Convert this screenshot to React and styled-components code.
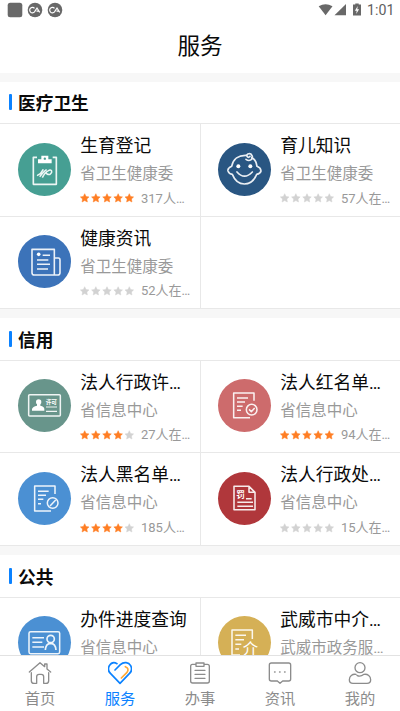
import React from 'react';
import styled, { createGlobalStyle } from 'styled-components';

const GlobalStyle = createGlobalStyle`
  * {
    box-sizing: border-box;
  }
  body {
    margin: 0;
    background: #fff;
    font-family: Roboto, 'Noto Sans CJK SC', sans-serif;
    color: #0a0a0a;
  }
`;

const Screen = styled.div`
  display: flex;
  flex-direction: column;
  height: 711px;
  overflow: hidden;
  background: #fff;
`;

const StatusBar = styled.div`
  display: flex;
  justify-content: space-between;
  flex: none;
  height: 20px;
  padding: 0 8px 0 7px;
`;

const StatusTime = styled.span`
  width: 25px;
  font-size: 14.2px;
  font-weight: 400;
  line-height: 21px;
  text-align: right;
  color: #606060;
`;

const StatusRight = styled.div`
  display: flex;
  gap: 4px;
`;

const Header = styled.header`
  flex: none;
  height: 52.5px;
  font-size: 22.6px;
  line-height: 54px;
  text-align: center;
`;

const Content = styled.main`
  flex: 1;
  min-height: 0;
  overflow: hidden;
`;

const Section = styled.section`
  border-top: 9px solid #f7f7f7;
`;

const SectionTitle = styled.h2`
  display: flex;
  align-items: center;
  gap: 6px;
  height: 42.6px;
  margin: 0;
  padding: 0 0 0 9px;
  border-bottom: 1px solid #e8e8e8;
  font-size: 17.7px;
  font-weight: 700;

  &::before {
    content: '';
    width: 3px;
    height: 16px;
    border-radius: 1px;
    background: #0b82ff;
  }
`;

const Grid = styled.div`
  display: grid;
  grid-template-columns: 200px 200px;
`;

const Card = styled.div`
  display: flex;
  height: 92.6px;
  padding: 7.5px 0 0 18px;
  border-bottom: 1px solid #e8e8e8;

  &:nth-child(even) {
    border-left: 1px solid #e8e8e8;
    padding-left: 17px;
  }
`;

const Badge = styled.svg`
  flex: none;
  width: 53px;
  height: 53px;
  margin: 11px 9.3px 0 0;
  border-radius: 50%;
  background: ${(props) => props.$color};
  fill: none;
  stroke: #fff;
  stroke-width: 4.6;
  stroke-linejoin: round;
  stroke-opacity: 0.9;

  text {
    fill: #fff;
    stroke: none;
    font-family: 'Noto Sans CJK SC', sans-serif;
  }
`;

const Info = styled.div`
  padding-top: 0.5px;
  white-space: nowrap;
`;

const Name = styled.div`
  font-size: 17.75px;
  line-height: 29px;
`;

const Dept = styled.div`
  font-size: 15.5px;
  line-height: 26.6px;
  color: #999;
`;

const Rating = styled.div`
  display: flex;
  align-items: center;
  height: 23px;
  margin-top: -1px;
`;

const Stars = styled.svg`
  width: 56px;
  height: 10px;
  margin-right: 4.7px;
`;

const Count = styled.span`
  font-size: 13px;
  line-height: 23px;
  color: #999;
`;

const TabBar = styled.nav`
  display: flex;
  flex: none;
  height: 56px;
  border-top: 1px solid #e2e2e2;
  background: #fff;
`;

const Tab = styled.div`
  display: flex;
  flex: 1;
  flex-direction: column;
  align-items: center;
  padding-top: 5px;
  font-size: 15.3px;
  line-height: 22px;
  color: ${(props) => (props.$active ? '#0b82ff' : '#8c8c8c')};

  svg {
    flex: none;
    width: 24px;
    height: 24px;
    margin-bottom: 3px;
    fill: none;
    stroke: currentColor;
    stroke-width: 4;
    stroke-linecap: round;
    stroke-linejoin: round;
  }
`;

const icons = {
  clipboard: (
    <>
      <path d='M57 43H46V124H115V43H104' strokeWidth='5' />
      <path
        d='M60 61V49H70V38H91V49H101V61Z'
        fill='#fff'
        stroke='none'
      />
      <circle cx='80.5' cy='47' r='3.5' fill='#469f93' stroke='none' />
      <path d='M57 98Q70 92 76 79M65 101Q80 83 86 80M73 104Q81 87 93 82Q102 79 101 88Q97 98 87 93Q82 89 87 86' />
    </>
  ),
  baby: (
    <path
      d='M85 37C62 36 45 48 41 70Q28 76 30 84Q33 93 43 94C51 114 66 123 79 123C94 123 108 114 116 94Q127 92 129 84Q128 74 117 70C115 56 109 47 101 44M84 49C94 57 107 49 102 38C98 29 85 31 87 40Q91 46 96 40M57 87Q79 112 103 87'
      strokeWidth='5'
      strokeLinecap='round'
    />
  ),
  news: (
    <>
      <path
        d='M109 120H49Q42 120 42 113V43H109V120ZM109 69H121Q126 69 126 75V113Q126 120 119 120H109'
        strokeWidth='4.8'
      />
      <path d='M74 61H96M57 75H91M57 88H96M57 102H90' />
      <circle cx='62' cy='58' r='5.5' fill='#fff' stroke='none' />
    </>
  ),
  license: (
    <>
      <rect x='32' y='47' width='95' height='64' rx='3' />
      <circle cx='62' cy='69' r='8' fill='#fff' stroke='none' />
      <path
        d='M57 74H67V80Q79 83 79 90V95H42V90Q44 82 57 80Z'
        fill='#fff'
        stroke='none'
      />
      <path d='M84 84H117M84 97H117' strokeWidth='3.5' />
      <text x='83' y='76' fontSize='17' fontWeight='700'>
        许可
      </text>
    </>
  ),
  approved: (
    <>
      <path d='M108 65V42H47V116H96M57 57H90M57 69H81M57 82H74M57 94H69' />
      <circle cx='101' cy='92' r='16' />
      <path d='M93 91L100 98L110 87' />
    </>
  ),
  banned: (
    <>
      <path d='M111 66V42H50V117H99M60 58H92M60 70H84M60 82H76M60 95H69' />
      <circle cx='104' cy='93' r='16' />
      <path d='M96 102L113 84' />
    </>
  ),
  penalty: (
    <>
      <path d='M93 43H48V113H111V61ZM93 43V61H111M84 80H101M58 91H105M58 103H105' />
      <text x='55' y='78' fontSize='26' fontWeight='700'>
        罚
      </text>
    </>
  ),
  idCard: (
    <>
      <rect x='33' y='47' width='92' height='66' rx='5' />
      <path d='M43 65H78M43 79H73M43 93H78' />
      <circle cx='98' cy='69' r='11' strokeWidth='5' />
      <path d='M82 102Q83 83 98 82Q113 83 114 102' strokeWidth='5' />
    </>
  ),
  agency: (
    <>
      <path d='M103 69V42H42V117H66M52 58H84M52 71H78M52 85H70M52 99H63' />
      <text x='74' y='115' fontSize='46'>
        介
      </text>
    </>
  ),
};

const sections = [
  {
    title: '医疗卫生',
    items: [
      { name: '生育登记', dept: '省卫生健康委', stars: 5, count: '317人…', color: '#469f93', icon: 'clipboard' },
      { name: '育儿知识', dept: '省卫生健康委', stars: 0, count: '57人在…', color: '#295682', icon: 'baby' },
      { name: '健康资讯', dept: '省卫生健康委', stars: 0, count: '52人在…', color: '#3c73b9', icon: 'news' },
      null,
    ],
  },
  {
    title: '信用',
    items: [
      { name: '法人行政许…', dept: '省信息中心', stars: 4, count: '27人在…', color: '#68958b', icon: 'license' },
      { name: '法人红名单…', dept: '省信息中心', stars: 5, count: '94人在…', color: '#cd6b6c', icon: 'approved' },
      { name: '法人黑名单…', dept: '省信息中心', stars: 4, count: '185人…', color: '#4b90d3', icon: 'banned' },
      { name: '法人行政处…', dept: '省信息中心', stars: 0, count: '15人在…', color: '#b0373b', icon: 'penalty' },
    ],
  },
  {
    title: '公共',
    items: [
      { name: '办件进度查询', dept: '省信息中心', color: '#4b90d3', icon: 'idCard' },
      { name: '武威市中介…', dept: '武威市政务服…', color: '#d5b056', icon: 'agency' },
    ],
  },
];

const tabs = [
  {
    label: '首页',
    icon: (
      <path d='M4 33L36 5L50 17V9H57V24L68 33M10 35V59Q10 67 18 67H23M62 35V59Q62 67 54 67H47V47Q47 40 40 40H33Q26 40 26 47V67' />
    ),
  },
  {
    label: '服务',
    active: true,
    icon: (
      <>
        <path
          d='M21 27L37 11C48 1 62 4 68 14Q75 28 64 38L36 67L8 38Q-3 28 4 14Q13 0 27 8'
          strokeWidth='5'
        />
        <path d='M52 17Q65 22 57 34L40 51' stroke='#ffa733' strokeWidth='5' />
      </>
    ),
  },
  {
    label: '办事',
    icon: (
      <path d='M23 10H13Q8 10 8 16V60Q8 66 14 66H58Q64 66 64 60V16Q64 10 58 10H49M24 6H48V16H24ZM21 28H51M21 40H51M21 52H51' />
    ),
  },
  {
    label: '资讯',
    icon: (
      <>
        <path d='M27 60H10Q4 60 4 54V12Q4 6 10 6H62Q68 6 68 12V54Q68 60 62 60H44L36 67L28 60' />
        <path d='M20 33H21M35 33H36M50 33H51' strokeWidth='5' />
      </>
    ),
  },
  {
    label: '我的',
    icon: (
      <>
        <circle cx='36' cy='20' r='15' />
        <path d='M24 40C13 38 4 46 4 56Q4 67 15 67H57Q68 67 68 56C68 46 59 38 48 40Q36 49 27 43' />
      </>
    ),
  },
];

const StarRow = ({ value }) => (
  <Stars viewBox='0 0 56 10'>
    {[0, 1, 2, 3, 4].map((i) => (
      <path
        key={i}
        transform={`translate(${i * 11.15 + 4.7} 5)`}
        d='M0-4.3L1.35-1.5L4.3-1.1L2.15 1L2.65 4L0 2.6L-2.65 4L-2.15 1L-4.3-1.1L-1.35-1.5Z'
        fill={i < value ? '#ff7e24' : '#d2d2d2'}
        stroke={i < value ? '#ff7e24' : '#d2d2d2'}
        strokeWidth='0.5'
        strokeLinejoin='round'
      />
    ))}
  </Stars>
);

const ServiceCard = ({ item }) => (
  <Card>
    {item && (
      <>
        <Badge viewBox='0 0 159 159' $color={item.color}>
          {icons[item.icon]}
          {item.icon === 'baby' && (
            <g fill='#fff' stroke='none'>
              <circle cx='61' cy='70' r='6' />
              <circle cx='97' cy='70' r='6' />
            </g>
          )}
        </Badge>
        <Info>
          <Name>{item.name}</Name>
          <Dept>{item.dept}</Dept>
          {item.count && (
            <Rating>
              <StarRow value={item.stars} />
              <Count>{item.count}</Count>
            </Rating>
          )}
        </Info>
      </>
    )}
  </Card>
);

const App = () => {
  return (
    <>
      <GlobalStyle />
      <Screen>
        <StatusBar>
          <svg width='58' height='20' viewBox='0 0 58 20'>
            <rect x='0.7' y='2.8' width='14.6' height='14.4' rx='2.5' fill='#686868' />
            {[28, 48].map((x) => (
              <g key={x} transform={`translate(${x} 10)`}>
                <circle r='7.3' fill='#686868' />
                <path
                  d='M-.5-1.6A2.7 2.7 0 1 0-.5 1.8L2-2L4.7 2.4M1.5 1.2H3.5'
                  fill='none'
                  stroke='#fff'
                  strokeWidth='1.2'
                />
              </g>
            ))}
          </svg>
          <StatusRight>
            <svg width='45' height='20' viewBox='0 0 45 20' fill='#686868'>
              <path d='M.7 6.3Q7.5 2 14.5 6.3L7.6 15.3Z' />
              <path d='M28 4V15.3H16.5Z' />
              <path d='M37.3 3.5H40.7V4.6H43V15.6H35V4.6H37.3Z' />
              <path d='M39.7 6L36.9 10.7H38.7L38.2 14L41.1 9.3H39.3Z' fill='#fff' />
            </svg>
            <StatusTime>1:01</StatusTime>
          </StatusRight>
        </StatusBar>
        <Header>服务</Header>
        <Content>
          {sections.map((section) => (
            <Section key={section.title}>
              <SectionTitle>{section.title}</SectionTitle>
              <Grid>
                {section.items.map((item, i) => (
                  <ServiceCard key={i} item={item} />
                ))}
              </Grid>
            </Section>
          ))}
        </Content>
        <TabBar>
          {tabs.map((tab) => (
            <Tab key={tab.label} $active={tab.active}>
              <svg viewBox='0 0 72 72'>{tab.icon}</svg>
              {tab.label}
            </Tab>
          ))}
        </TabBar>
      </Screen>
    </>
  );
};

export default App;
